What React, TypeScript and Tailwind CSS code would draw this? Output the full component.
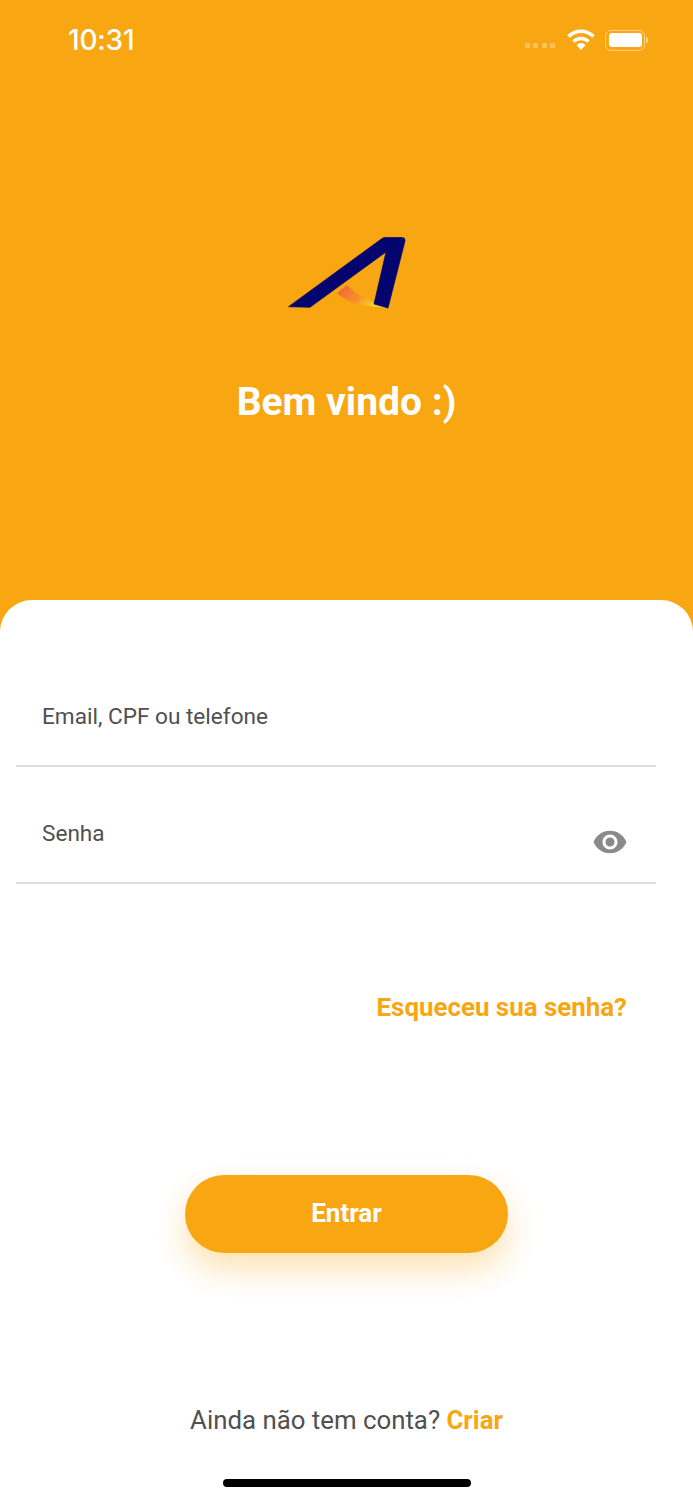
export default function App() {
  return (
    <div className="relative flex h-[1500px] w-[693px] flex-col overflow-hidden bg-[#f9a613] font-['Roboto',sans-serif]">
      <div className="flex h-[80px] shrink-0 items-start justify-between pl-[68px] pr-[45px] pt-[24px]">
        <span className="font-['Inter',sans-serif] text-[28px] font-medium leading-[32px] tracking-[-0.2px] text-white">10:31</span>
        <div className="flex items-center pt-[5px]">
          <div className="mt-[10px] mr-[12px] flex gap-[3.3px]">
            <div className="h-[5px] w-[5px] rounded-[1px] bg-white/30" />
            <div className="h-[5px] w-[5px] rounded-[1px] bg-white/30" />
            <div className="h-[5px] w-[5px] rounded-[1px] bg-white/30" />
            <div className="h-[5px] w-[5px] rounded-[1px] bg-white/30" />
          </div>
          <svg width="28" height="22" viewBox="0 0 28 22" className="mr-[10px]">
            <path d="M1.5 7.5 C8.5 0.5 19.5 0.5 26.5 7.5" fill="none" stroke="#fff" strokeWidth="3.6" />
            <path d="M6.5 12.5 C10.5 8.5 17.5 8.5 21.5 12.5" fill="none" stroke="#fff" strokeWidth="3.4" />
            <path d="M9.5 16.2 C12 13.4 16 13.4 18.5 16.2 L14 21 Z" fill="#fff" />
          </svg>
          <div className="flex items-center">
            <div className="flex h-[21px] w-[40px] items-center justify-center rounded-[6px] border-[1.5px] border-white/50">
              <div className="h-[14px] w-[33px] rounded-[3px] bg-white" />
            </div>
            <div className="ml-[1px] h-[6px] w-[2px] rounded-r-[2px] bg-white/50" />
          </div>
        </div>
      </div>

      <div className="flex h-[520px] shrink-0 flex-col items-center pt-[112px]">
        <div className="flex h-[160px] w-[160px] items-center justify-center rounded-[14px] border border-white/[0.03]">
          <svg width="158" height="158" viewBox="1 1 158 158" className="shrink-0">
            <defs>
              <linearGradient id="swoosh" x1="0" y1="0" x2="1" y2="0.4">
                <stop offset="0" stopColor="#f0603a" />
                <stop offset="0.55" stopColor="#f7902c" />
                <stop offset="1" stopColor="#f6e027" />
              </linearGradient>
            </defs>
            <path d="M70 101 L80 93 C86 100 100 109 121 116 L93 113 C84 110 74 106 70 101 Z" fill="url(#swoosh)" />
            <path d="M21.5 114.7 L115 46.5 Q116.5 45.5 118 45.5 L135 45.5 Q138.5 45.5 138 49 L121 116 L107 112 L119 60 L43 115.3 Z" fill="#04046e" stroke="#04046e" strokeWidth="0.7" strokeLinejoin="round" />
          </svg>
        </div>
        <h1 className="mt-[26px] text-[39px] font-bold leading-[48px] text-white">Bem vindo :)</h1>
      </div>

      <div className="flex flex-1 flex-col rounded-t-[32px] bg-white">
        <div className="mx-[16px] mt-[100px] flex h-[67px] w-[640px] shrink-0 items-start border-b-2 border-[#dedede] pl-[26px] pt-[1px]">
          <span className="text-[22.6px] leading-[32px] text-[#505050]">Email, CPF ou telefone</span>
        </div>
        <div className="mx-[16px] mt-[50px] flex h-[67px] w-[640px] shrink-0 items-start justify-between border-b-2 border-[#dedede] pl-[26px] pr-[28px]">
          <span className="mt-[1px] text-[22.6px] leading-[32px] text-[#505050]">Senha</span>
          <svg width="36" height="36" viewBox="0 0 24 24" fill="#8a8a8a" className="mt-[7px]">
            <path d="M12 4.5C7 4.5 2.73 7.61 1 12c1.73 4.39 6 7.5 11 7.5s9.27-3.11 11-7.5c-1.73-4.39-6-7.5-11-7.5zM12 17c-2.76 0-5-2.24-5-5s2.24-5 5-5 5 2.24 5 5-2.24 5-5 5zm0-8c-1.66 0-3 1.34-3 3s1.34 3 3 3 3-1.34 3-3-1.34-3-3-3z" />
          </svg>
        </div>
        <div className="mt-[106px] flex justify-end pr-[66px]">
          <span className="text-[25.9px] font-bold leading-[34px] text-[#f9a613]">Esqueceu sua senha?</span>
        </div>
        <div className="mt-[151px] flex justify-center">
          <div className="flex h-[78px] w-[323px] items-center justify-center rounded-[39px] bg-[#f9a613] pb-[2px] shadow-[0_16px_32px_rgba(249,166,19,0.32)]">
            <span className="text-[26px] font-bold text-white">Entrar</span>
          </div>
        </div>
        <div className="mt-[149px] flex justify-center text-[25.8px] leading-[36px] text-[#505050]">
          <span>Ainda não tem conta?&nbsp;</span>
          <span className="font-bold text-[#f9a613]">Criar</span>
        </div>
        <div className="mt-[41px] flex justify-center">
          <div className="h-[8px] w-[248px] rounded-full bg-black" />
        </div>
      </div>
    </div>
  );
}
